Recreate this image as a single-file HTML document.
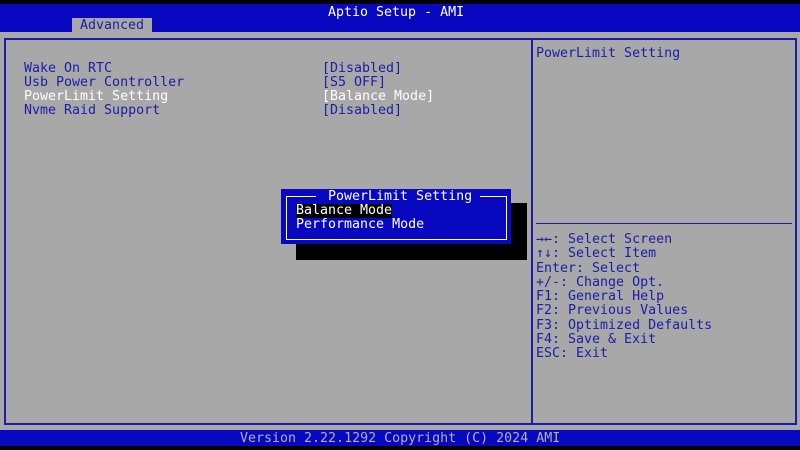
<!DOCTYPE html>
<html><head><style>
*{margin:0;padding:0;box-sizing:border-box}
body{width:800px;height:450px;background:#a8a8a8;position:relative;overflow:hidden;font-family:"DejaVu Sans Mono","Liberation Mono",monospace;font-size:13.3px;color:#1c1ca8}
.a{position:absolute;white-space:pre;line-height:14px}
.bk{position:absolute;background:#000}
.bl{position:absolute;background:#0808c0}
.ln{position:absolute;background:#1c1ca8}
.w{color:#fff}
</style></head><body>
<div class="bk" style="left:0;top:0;width:800px;height:4px"></div>
<div class="bl" style="left:0;top:4px;width:800px;height:28px"></div>
<div class="a w" style="left:328px;top:6px">Aptio Setup - AMI</div>
<div class="a" style="left:72px;top:18px;width:80px;height:14px;background:#a8a8a8;color:#1c1ca8;padding-left:8px;line-height:16px">Advanced</div>
<div class="ln" style="left:4px;top:38px;width:793px;height:2px"></div>
<div class="ln" style="left:4px;top:38px;width:2px;height:387px"></div>
<div class="ln" style="left:795px;top:38px;width:2px;height:387px"></div>
<div class="ln" style="left:4px;top:423px;width:793px;height:2px"></div>
<div class="ln" style="left:531px;top:38px;width:2px;height:387px"></div>
<div class="ln" style="left:536px;top:223px;width:256px;height:1px"></div>
<div class="a" style="left:24px;top:62px">Wake On RTC</div>
<div class="a" style="left:24px;top:76px">Usb Power Controller</div>
<div class="a w" style="left:24px;top:90px">PowerLimit Setting</div>
<div class="a" style="left:24px;top:104px">Nvme Raid Support</div>
<div class="a" style="left:322px;top:62px">[Disabled]</div>
<div class="a" style="left:322px;top:76px">[S5 OFF]</div>
<div class="a w" style="left:322px;top:90px">[Balance Mode]</div>
<div class="a" style="left:322px;top:104px">[Disabled]</div>
<div class="a" style="left:536px;top:47px">PowerLimit Setting</div>
<div class="a" style="left:536px;top:233px;line-height:14.25px">→←: Select Screen
↑↓: Select Item
Enter: Select
+/-: Change Opt.
F1: General Help
F2: Previous Values
F3: Optimized Defaults
F4: Save &amp; Exit
ESC: Exit</div>
<div class="bk" style="left:296px;top:203px;width:231px;height:57px"></div>
<div class="bl" style="left:281px;top:189px;width:230px;height:55px"></div>
<div style="position:absolute;left:286px;top:196px;width:221px;height:44px;border:1px solid #fff;border-top:none"></div>
<div style="position:absolute;left:286px;top:196px;width:30px;height:1px;background:#fff"></div>
<div style="position:absolute;left:480px;top:196px;width:27px;height:1px;background:#fff"></div>
<div class="a w" style="left:328px;top:190px">PowerLimit Setting</div>
<div class="a w" style="left:296px;top:204px;background:#000">Balance Mode</div>
<div class="a w" style="left:296px;top:218px">Performance Mode</div>
<div class="bl" style="left:0;top:430px;width:800px;height:16px"></div>
<div class="a" style="left:240px;top:432px;color:#b0b0b0">Version 2.22.1292 Copyright (C) 2024 AMI</div>
<div class="bk" style="left:0;top:446px;width:800px;height:4px"></div>
</body></html>
